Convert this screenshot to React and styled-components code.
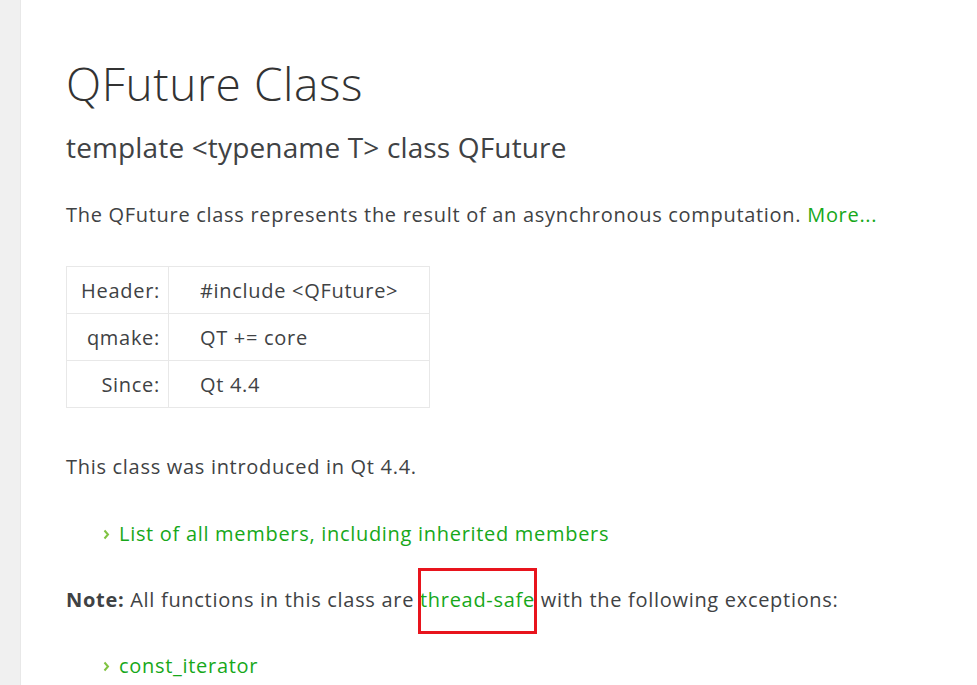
import React from 'react';
import styled, { createGlobalStyle } from 'styled-components';

const GlobalStyle = createGlobalStyle`
  html, body {
    margin: 0;
    padding: 0;
    background: #ffffff;
  }
  body {
    font-family: "Open Sans", Roboto, sans-serif;
    color: #404244;
  }
`;

const Page = styled.div`
  display: flex;
  min-height: 685px;
`;

const SideStrip = styled.div`
  width: 20px;
  flex: none;
  background: #f0f0f0;
  border-right: 1px solid #e8e8e8;
`;

const Content = styled.main`
  flex: 1;
  padding: 56px 0 0 45px;
  letter-spacing: 0.7px;
`;

const Title = styled.h1`
  margin: 0;
  font-size: 46px;
  line-height: 55px;
  font-weight: 300;
  letter-spacing: 0.6px;
  color: #333333;
`;

const Subtitle = styled.h2`
  margin: 19px 0 0;
  font-size: 28px;
  line-height: 34px;
  font-weight: 400;
  letter-spacing: 0.15px;
  color: #404244;
`;

const Para = styled.p`
  margin: ${(p) => p.$top || 36}px 0 0;
  font-size: 20px;
  line-height: 30px;
`;

const Link = styled.a`
  color: #17a81a;
  text-decoration: none;
`;

const Marked = styled(Link)`
  position: relative;
  &::after {
    content: '';
    position: absolute;
    left: -2px;
    right: -2px;
    top: -18px;
    bottom: -21px;
    border: 3px solid #e8141d;
  }
`;

const InfoTable = styled.table`
  margin-top: 36px;
  border-collapse: collapse;
  width: 364px;
  font-size: 20px;
`;

const Cell = styled.td`
  border: 1px solid #e8e8e8;
  height: 46px;
  padding: 0 ${(p) => (p.$label ? '8px' : '10px')} 0 ${(p) => (p.$label ? '10px' : '31px')};
  text-align: ${(p) => (p.$label ? 'right' : 'left')};
  width: ${(p) => (p.$label ? '83px' : 'auto')};
  vertical-align: middle;
`;

const List = styled.ul`
  margin: ${(p) => p.$top || 36}px 0 0;
  padding: 0 0 0 37px;
  list-style: none;
  font-size: 20px;
  line-height: 30px;
`;

const Item = styled.li`
  display: flex;
  align-items: center;
  gap: 9px;
`;

const Chevron = () => (
  <svg width="7" height="11" viewBox="0 0 7 11">
    <path d="M1.5 1.5 L5 5.5 L1.5 9.5" fill="none" stroke="#80c342" strokeWidth="2" />
  </svg>
);

const rows = [
  ['Header:', '#include <QFuture>'],
  ['qmake:', 'QT += core'],
  ['Since:', 'Qt 4.4'],
];

export default function App() {
  return (
    <>
      <GlobalStyle />
      <Page>
        <SideStrip />
        <Content>
          <Title>QFuture Class</Title>
          <Subtitle>template &lt;typename T&gt; class QFuture</Subtitle>
          <Para>
            The QFuture class represents the result of an asynchronous computation.{' '}
            <Link href="#details">More...</Link>
          </Para>
          <InfoTable>
            <tbody>
              {rows.map(([label, value]) => (
                <tr key={label}>
                  <Cell $label>{label}</Cell>
                  <Cell>{value}</Cell>
                </tr>
              ))}
            </tbody>
          </InfoTable>
          <Para $top={44}>This class was introduced in Qt 4.4.</Para>
          <List $top={37}>
            <Item>
              <Chevron />
              <Link href="#members">List of all members, including inherited members</Link>
            </Item>
          </List>
          <Para>
            <b>Note:</b> All functions in this class are <Marked href="#thread-safe">thread-safe</Marked> with the
            following exceptions:
          </Para>
          <List>
            <Item>
              <Chevron />
              <Link href="#const_iterator">const_iterator</Link>
            </Item>
          </List>
        </Content>
      </Page>
    </>
  );
}
